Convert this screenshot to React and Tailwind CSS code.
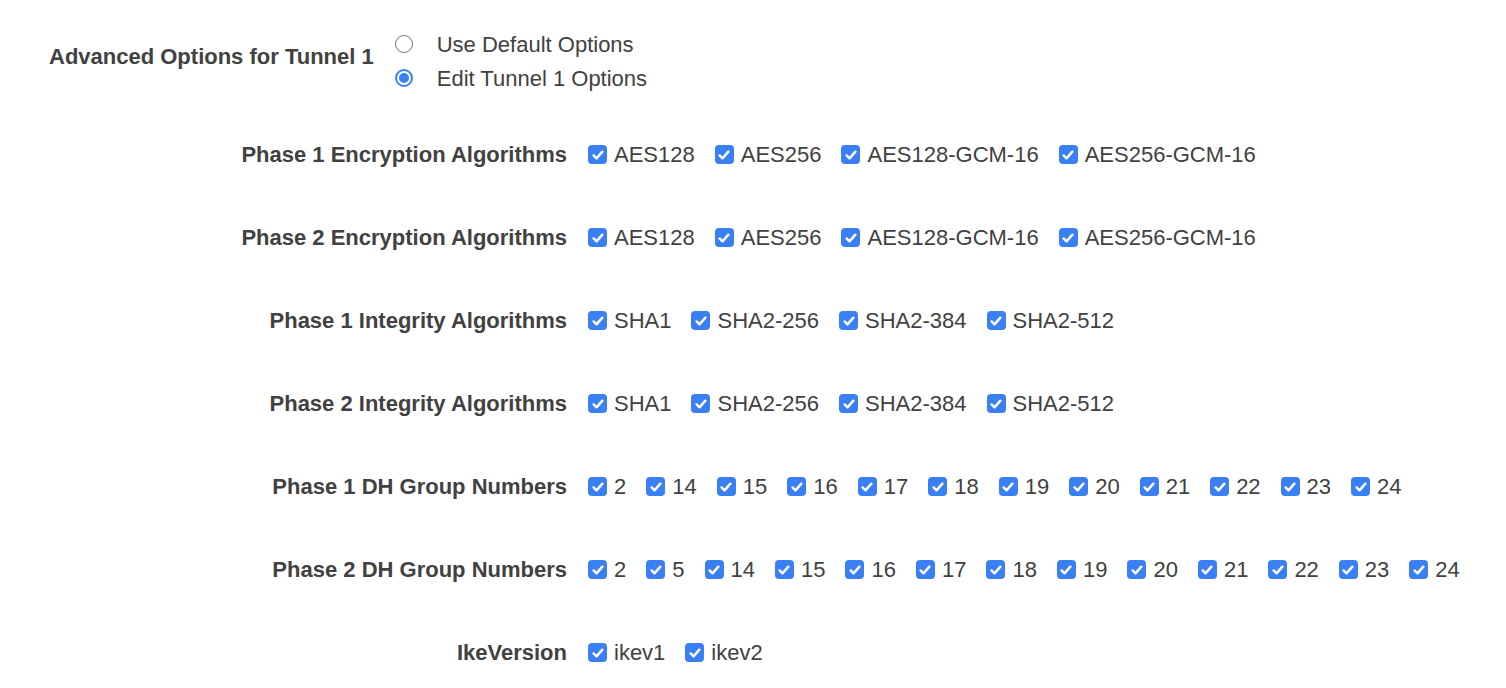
import React from "react";

const rows = [
  { label: "Phase 1 Encryption Algorithms", options: ["AES128", "AES256", "AES128-GCM-16", "AES256-GCM-16"] },
  { label: "Phase 2 Encryption Algorithms", options: ["AES128", "AES256", "AES128-GCM-16", "AES256-GCM-16"] },
  { label: "Phase 1 Integrity Algorithms", options: ["SHA1", "SHA2-256", "SHA2-384", "SHA2-512"] },
  { label: "Phase 2 Integrity Algorithms", options: ["SHA1", "SHA2-256", "SHA2-384", "SHA2-512"] },
  { label: "Phase 1 DH Group Numbers", options: ["2", "14", "15", "16", "17", "18", "19", "20", "21", "22", "23", "24"] },
  { label: "Phase 2 DH Group Numbers", options: ["2", "5", "14", "15", "16", "17", "18", "19", "20", "21", "22", "23", "24"] },
  { label: "IkeVersion", options: ["ikev1", "ikev2"] },
];

const Checkbox = () => (
  <span className="flex h-[19px] w-[19px] shrink-0 items-center justify-center rounded-[4px] bg-[#3b7ff5]">
    <svg width="14" height="14" viewBox="0 0 16 16" fill="none">
      <path d="M3 8.5l3.3 3.3L13 4.2" stroke="white" strokeWidth="2.8" strokeLinecap="round" strokeLinejoin="round" />
    </svg>
  </span>
);

const Radio = ({ checked }) =>
  checked ? (
    <span className="flex h-[18px] w-[18px] shrink-0 items-center justify-center rounded-full border-2 border-[#3b7ff5] bg-white">
      <span className="h-[10px] w-[10px] rounded-full bg-[#3b7ff5]" />
    </span>
  ) : (
    <span className="h-[18px] w-[18px] shrink-0 rounded-full border border-[#767676] bg-white" />
  );

export default function App() {
  return (
    <div
      className="min-h-[688px] w-[1506px] bg-white text-[22px] text-[#414141]"
      style={{ fontFamily: '"Liberation Sans", Arial, sans-serif' }}
    >
      {/* Advanced options */}
      <div className="flex gap-[21px] pl-[49px] pt-[27px]">
        <div className="mt-[13px] leading-[34px] font-bold">Advanced Options for Tunnel 1</div>
        <div className="flex flex-col">
          <label className="flex h-[34px] items-center gap-[24px]">
            <Radio />
            <span>Use Default Options</span>
          </label>
          <label className="flex h-[34px] items-center gap-[24px]">
            <Radio checked />
            <span>Edit Tunnel 1 Options</span>
          </label>
        </div>
      </div>

      {/* Tunnel options */}
      <div className="mt-[18px] flex flex-col">
        {rows.map((row) => (
          <div key={row.label} className="flex h-[83px] items-center gap-[21px]">
            <div className="w-[567px] shrink-0 text-right font-bold">{row.label}</div>
            <div className="flex items-center gap-[20px]">
              {row.options.map((opt) => (
                <label key={opt} className="flex items-center gap-[7px]">
                  <Checkbox />
                  <span>{opt}</span>
                </label>
              ))}
            </div>
          </div>
        ))}
      </div>
    </div>
  );
}
